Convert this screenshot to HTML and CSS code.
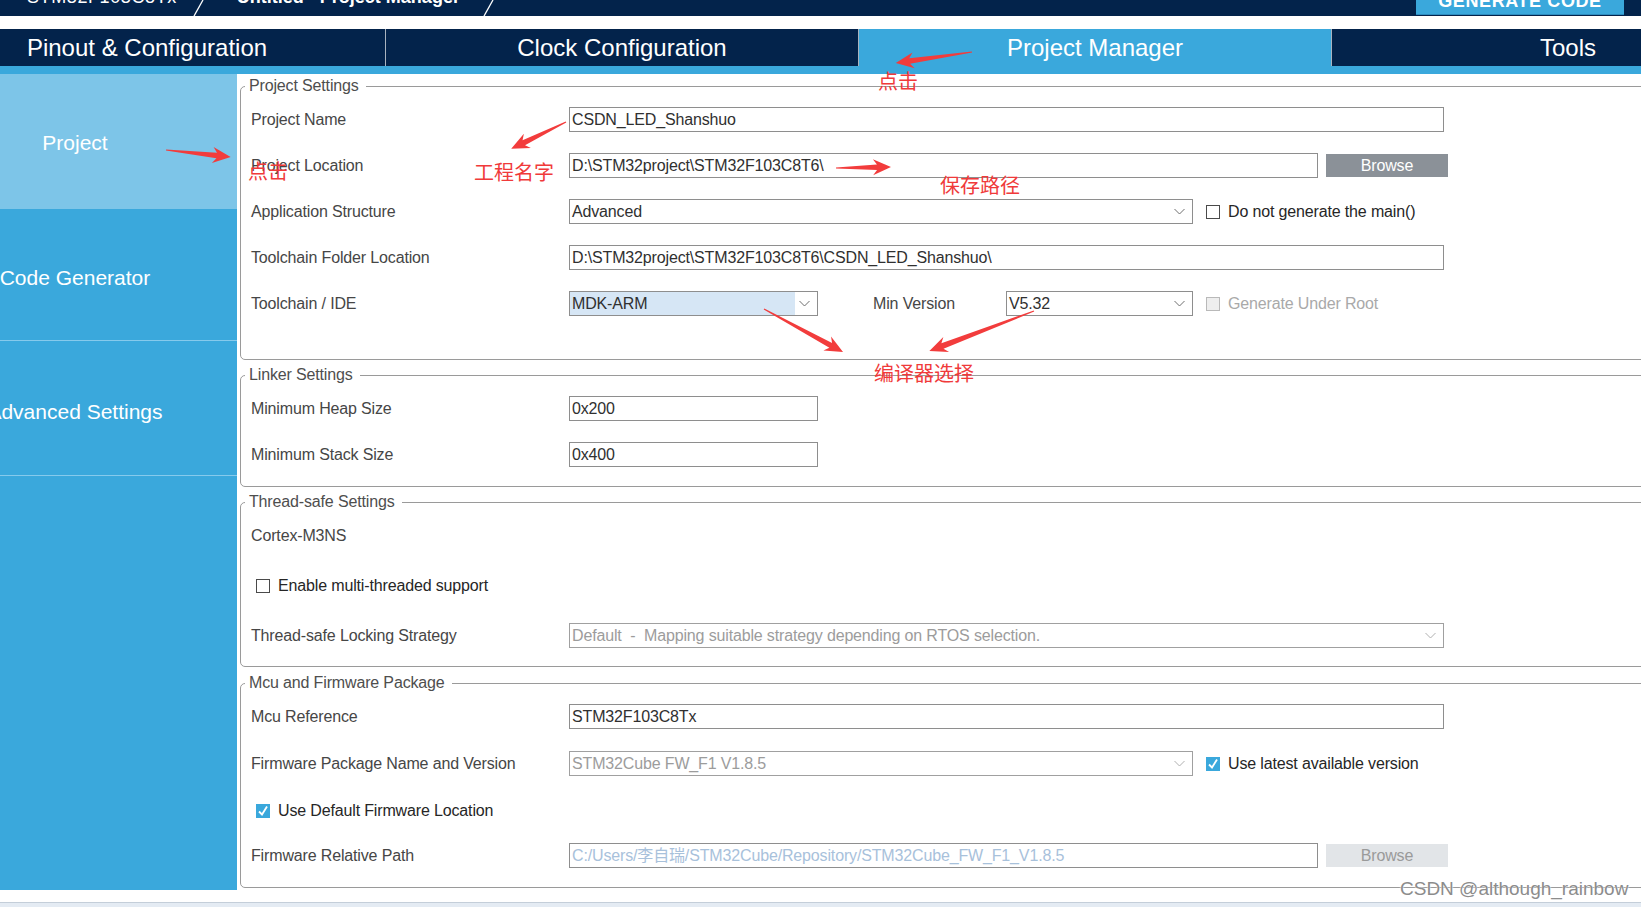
FILE: index.html
```html
<!DOCTYPE html>
<html lang="zh-CN">
<head>
<meta charset="utf-8">
<title>STM32CubeMX - Project Manager</title>
<link rel="stylesheet" href="styles.css">
</head>
<body>
<div class="app">
  <header class="titlebar">
    <span class="crumb">STM32F103C8Tx</span>
    <svg class="sep sep1" width="14" height="16" viewBox="0 0 14 16"><line x1="2" y1="16" x2="11" y2="0"/></svg>
    <span class="crumb crumb-bold">Untitled - Project Manager</span>
    <svg class="sep sep2" width="14" height="16" viewBox="0 0 14 16"><line x1="2" y1="16" x2="11" y2="0"/></svg>
    <button class="generate"><span>GENERATE CODE</span></button>
  </header>

  <nav class="tabs">
    <div class="tab tab-first">Pinout &amp; Configuration</div>
    <div class="tab">Clock Configuration</div>
    <div class="tab tab-active">Project Manager</div>
    <div class="tab">Tools</div>
  </nav>
  <div class="tabline"></div>

  <div class="workspace">
    <aside class="sidebar">
      <div class="side-item side-selected">Project</div>
      <div class="side-item side-code">Code Generator</div>
      <div class="side-item side-adv">Advanced Settings</div>
    </aside>

    <main class="content">
      <section class="group g-project">
        <div class="legend">Project Settings</div>
        <div class="rows rows-21">
          <div class="row">
            <span class="lbl">Project Name</span>
            <div class="field w-full">CSDN_LED_Shanshuo</div>
          </div>
          <div class="row">
            <span class="lbl">Project Location</span>
            <div class="field w-path">D:\STM32project\STM32F103C8T6\</div>
            <div class="browse">Browse</div>
          </div>
          <div class="row">
            <span class="lbl">Application Structure</span>
            <div class="field select w-wide"><span class="sel-text">Advanced</span><svg class="chev" width="11" height="7" viewBox="0 0 11 7"><polyline points="0.5,1 5.5,6 10.5,1"/></svg></div>
            <span class="cb"></span><span class="cb-text">Do not generate the main()</span>
          </div>
          <div class="row">
            <span class="lbl">Toolchain Folder Location</span>
            <div class="field w-full">D:\STM32project\STM32F103C8T6\CSDN_LED_Shanshuo\</div>
          </div>
          <div class="row">
            <span class="lbl">Toolchain / IDE</span>
            <div class="field select w-small"><span class="sel-text sel-hl">MDK-ARM</span><svg class="chev" width="11" height="7" viewBox="0 0 11 7"><polyline points="0.5,1 5.5,6 10.5,1"/></svg></div>
            <span class="minver">Min Version</span>
            <div class="field select w-ver"><span class="sel-text">V5.32</span><svg class="chev" width="11" height="7" viewBox="0 0 11 7"><polyline points="0.5,1 5.5,6 10.5,1"/></svg></div>
            <span class="cb cb-disabled"></span><span class="cb-text cb-text-disabled">Generate Under Root</span>
          </div>
        </div>
      </section>

      <section class="group g-linker">
        <div class="legend">Linker Settings</div>
        <div class="rows rows-21">
          <div class="row">
            <span class="lbl">Minimum Heap Size</span>
            <div class="field w-small">0x200</div>
          </div>
          <div class="row">
            <span class="lbl">Minimum Stack Size</span>
            <div class="field w-small">0x400</div>
          </div>
        </div>
      </section>

      <section class="group g-thread">
        <div class="legend">Thread-safe Settings</div>
        <div class="rows rows-25">
          <div class="row">
            <span class="lbl">Cortex-M3NS</span>
          </div>
          <div class="row row-check">
            <span class="cb"></span><span class="cb-text">Enable multi-threaded support</span>
          </div>
          <div class="row">
            <span class="lbl">Thread-safe Locking Strategy</span>
            <div class="field select field-disabled w-full"><span class="sel-text">Default&nbsp;&nbsp;-&nbsp;&nbsp;Mapping suitable strategy depending on RTOS selection.</span><svg class="chev chev-light" width="11" height="7" viewBox="0 0 11 7"><polyline points="0.5,1 5.5,6 10.5,1"/></svg></div>
          </div>
        </div>
      </section>

      <section class="group g-mcu">
        <div class="legend">Mcu and Firmware Package</div>
        <div class="rows rows-mcu">
          <div class="row">
            <span class="lbl">Mcu Reference</span>
            <div class="field w-full">STM32F103C8Tx</div>
          </div>
          <div class="row">
            <span class="lbl">Firmware Package Name and Version</span>
            <div class="field select field-disabled w-wide"><span class="sel-text">STM32Cube FW_F1 V1.8.5</span><svg class="chev chev-light" width="11" height="7" viewBox="0 0 11 7"><polyline points="0.5,1 5.5,6 10.5,1"/></svg></div>
            <span class="cb cb-checked"><svg width="14" height="14" viewBox="0 0 14 14"><polyline points="3,7.5 6,10.5 11,2.5"/></svg></span><span class="cb-text">Use latest available version</span>
          </div>
          <div class="row row-check">
            <span class="cb cb-checked"><svg width="14" height="14" viewBox="0 0 14 14"><polyline points="3,7.5 6,10.5 11,2.5"/></svg></span><span class="cb-text">Use Default Firmware Location</span>
          </div>
          <div class="row">
            <span class="lbl">Firmware Relative Path</span>
            <div class="field w-path field-path">C:/Users/李自瑞/STM32Cube/Repository/STM32Cube_FW_F1_V1.8.5</div>
            <div class="browse browse-disabled">Browse</div>
          </div>
        </div>
      </section>
    </main>
  </div>
  <div class="footgap"></div>
  <div class="bottombar"></div>
</div>

<div class="annot">
  <svg class="arrows" width="1641" height="907" viewBox="0 0 1641 907">
    <polygon transform="translate(972,52) rotate(171.8)" points="0,-0.6 63,-2.8 59,-8 77,0 59,8 63,2.8 0,0.6"/>
    <polygon transform="translate(166,150) rotate(6.1)" points="0,-0.6 51,-2.8 47,-8 65,0 47,8 51,2.8 0,0.6"/>
    <polygon transform="translate(566,122) rotate(153.9)" points="0,-0.6 47,-2.8 43,-8 61,0 43,8 47,2.8 0,0.6"/>
    <polygon transform="translate(836,168) rotate(-1)" points="0,-0.6 41,-2.8 37,-8 55,0 37,8 41,2.8 0,0.6"/>
    <polygon transform="translate(764,309) rotate(28.6)" points="0,-0.6 76,-2.8 72,-8 90,0 72,8 76,2.8 0,0.6"/>
    <polygon transform="translate(1034,311) rotate(159.1)" points="0,-0.6 98,-3 94,-8 112,0 94,8 98,3 0,0.6"/>
  </svg>
  <span class="note note-tab">点击</span>
  <span class="note note-side">点击</span>
  <span class="note note-name">工程名字</span>
  <span class="note note-path">保存路径</span>
  <span class="note note-ide">编译器选择</span>
  <span class="watermark">CSDN @although_rainbow</span>
</div>
</body>
</html>
```

FILE: styles.css
```css
html, body {
  margin: 0;
  padding: 0;
  overflow: hidden;
}

body {
  position: relative;
  width: 1641px;
  height: 907px;
  background: #ffffff;
  font-family: "Liberation Sans", Arial, "Noto Sans CJK SC", sans-serif;
  color: #444444;
}

/* the application is scrolled 87px to the left in the capture */
.app {
  margin-left: -87px;
  width: calc(100% + 87px);
  overflow: hidden;
}

/* ---------- title bar ---------- */
.titlebar {
  height: 16px;
  background: #03234b;
  display: flex;
  align-items: flex-start;
  padding: 0 17px 0 114px;
  overflow: hidden;
  color: #ffffff;
}

.crumb {
  font-size: 18px;
  line-height: 18px;
  margin-top: -12px;
  letter-spacing: 0.6px;
  white-space: nowrap;
}

.crumb-bold {
  font-weight: bold;
  letter-spacing: 0;
  margin-left: 31px;
}

.sep {
  flex: none;
  stroke: #ffffff;
  stroke-width: 1.3;
}

.sep1 { margin-left: 15px; }
.sep2 { margin-left: 22px; }

.generate {
  margin-left: auto;
  width: 208px;
  height: 15px;
  padding: 0;
  border: none;
  border-bottom: 1px solid #2c8cc0;
  background: #3aa8dc;
  color: #ffffff;
  font-family: "Liberation Sans", Arial, sans-serif;
  font-size: 18px;
  font-weight: bold;
  letter-spacing: 0.6px;
  overflow: hidden;
}

.generate span {
  display: block;
  line-height: 18px;
  margin-top: -12px;
}

/* ---------- tabs ---------- */
.tabs {
  margin-top: 13px;
  height: 37px;
  background: #03234b;
  display: flex;
  overflow: hidden;
}

.tab {
  flex: 0 0 473px;
  box-sizing: border-box;
  border-left: 1px solid #a9b3bf;
  color: #ffffff;
  font-size: 24px;
  line-height: 38px;
  text-align: center;
  white-space: nowrap;
}

.tab-first {
  flex-basis: 472px;
  border-left: none;
  padding-right: 4px;
}

.tab-active {
  background: #3aa8dc;
}

.tabline {
  height: 8px;
  background: #3aa8dc;
}

/* ---------- workspace ---------- */
.workspace {
  display: flex;
  height: 816px;
}

.sidebar {
  flex: 0 0 324px;
  background: #3aa8dc;
}

.side-item {
  box-sizing: border-box;
  display: flex;
  align-items: center;
  justify-content: center;
  color: #ffffff;
  font-size: 21px;
  white-space: nowrap;
}

.side-selected {
  height: 135px;
  background: #7dc5e8;
  padding-top: 2px;
}

.side-code {
  height: 132px;
  padding-top: 6px;
  border-bottom: 1px solid #86caec;
}

.side-adv {
  height: 135px;
  padding-top: 8px;
  border-bottom: 1px solid #86caec;
}

.content {
  flex: 1;
  min-width: 0;
  padding-left: 3px;
  background: #ffffff;
}

/* ---------- groups ---------- */
.group {
  border: 1px solid #9a9a9a;
  border-radius: 5px;
  margin-right: -40px;
  padding: 0 0 0 10px;
  margin-top: 14px;
}

.g-project { margin-top: 12px; padding-bottom: 43px; }
.g-linker { margin-top: 15px; padding-bottom: 19px; }
.g-thread { margin-top: 15px; padding-bottom: 18px; }
.g-mcu { margin-top: 16px; padding-bottom: 19px; }

.legend {
  display: table;
  margin: -10px 0 0 -6px;
  padding: 0 7px 0 4px;
  background: #ffffff;
  font-size: 16px;
  line-height: 18px;
  letter-spacing: -0.15px;
  color: #4e4e4e;
}

.rows {
  margin-top: 12px;
  display: flex;
  flex-direction: column;
}

.rows-21 { gap: 21px; }
.rows-25 { gap: 25px; }
.rows-mcu { gap: 22px; }
.rows-mcu .row-check { margin-bottom: -2px; }

.row {
  display: flex;
  align-items: center;
  height: 25px;
  font-size: 16px;
  letter-spacing: -0.15px;
}

.row-check {
  padding-left: 5px;
}

.lbl {
  flex: 0 0 318px;
  color: #464646;
  white-space: nowrap;
}

.field {
  box-sizing: border-box;
  height: 25px;
  border: 1px solid #8e8e8e;
  background: #ffffff;
  color: #303030;
  font-size: 16px;
  line-height: 23px;
  padding: 0 2px;
  white-space: nowrap;
  overflow: hidden;
  flex: none;
}

.w-full { width: 875px; }
.w-path { width: 749px; }
.w-wide { width: 624px; }
.w-small { width: 249px; }
.w-ver { width: 187px; }

.select {
  display: flex;
  align-items: stretch;
  padding: 0;
}

.sel-text {
  flex: 1;
  padding-left: 2px;
  overflow: hidden;
}

.sel-hl {
  flex: 0 0 223px;
  background: #d6e6f5;
}

.chev {
  flex: none;
  align-self: center;
  margin: 0 7px 0 4px;
  fill: none;
  stroke: #6e6e6e;
  stroke-width: 1;
}

.chev-light {
  stroke: #b0b0b0;
}

.field-disabled {
  color: #9c9c9c;
  border-color: #a0a0a0;
}

.field-path {
  color: #a8c1db;
  border-color: #8e8e8e;
}

.browse {
  flex: none;
  margin-left: 8px;
  width: 122px;
  height: 23px;
  background: #8b9198;
  color: #ffffff;
  font-size: 16px;
  line-height: 23px;
  text-align: center;
}

.browse-disabled {
  background: #e2e5e8;
  color: #9a9a9a;
}

.minver {
  flex: 0 0 133px;
  margin-left: 55px;
  color: #464646;
}

/* ---------- checkboxes ---------- */
.cb {
  flex: none;
  box-sizing: border-box;
  width: 14px;
  height: 14px;
  border: 1px solid #4a4a4a;
  background: #ffffff;
  margin-left: 13px;
}

.row-check .cb {
  margin-left: 0;
}

.cb-disabled {
  border-color: #b9b9b9;
  background: #eeeeee;
}

.cb-checked {
  border: none;
  background: #3aa8dc;
}

.cb-checked svg {
  display: block;
  fill: none;
  stroke: #ffffff;
  stroke-width: 1.8;
}

.cb-text {
  margin-left: 8px;
  color: #262626;
  white-space: nowrap;
}

.cb-text-disabled {
  color: #a9a9a9;
}

/* ---------- bottom ---------- */
.footgap {
  height: 12px;
}

.bottombar {
  height: 5px;
  background: #e4ebf3;
  border-top: 1px solid #c4ced9;
}

/* ---------- annotation layer ---------- */
.annot {
  position: absolute;
  left: 0;
  top: 0;
  width: 1641px;
  height: 907px;
  pointer-events: none;
}

.arrows {
  position: absolute;
  left: 0;
  top: 0;
}

.arrows polygon {
  fill: #f23c3c;
}

.note {
  position: absolute;
  font-family: "Noto Sans CJK SC", sans-serif;
  font-size: 20px;
  line-height: 20px;
  color: #f03a3a;
  white-space: nowrap;
}

.note-tab { left: 878px; top: 71px; }
.note-side { left: 248px; top: 161px; }
.note-name { left: 474px; top: 162px; }
.note-path { left: 940px; top: 175px; }
.note-ide { left: 874px; top: 363px; }

.watermark {
  position: absolute;
  left: 1400px;
  top: 879px;
  font-family: "Liberation Sans", Arial, sans-serif;
  font-size: 19px;
  line-height: 19px;
  color: #8c8c8c;
  text-shadow: 0 0 2px #ffffff, 0 0 1px #ffffff;
  white-space: nowrap;
}
```
